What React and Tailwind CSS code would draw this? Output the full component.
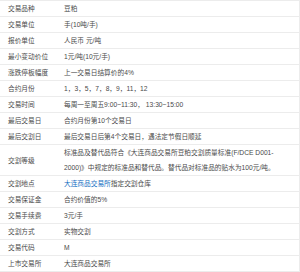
const rows = [
  ['交易品种', '豆粕'],
  ['交易单位', '手(10吨/手)'],
  ['报价单位', '人民币 元/吨'],
  ['最小变动价位', '1元/吨(10元/手)'],
  ['涨跌停板幅度', '上一交易日结算价的4%'],
  ['合约月份', '1，3，5，7，8，9，11，12'],
  ['交易时间', '每周一至周五9:00~11:30， 13:30~15:00'],
  ['最后交易日', '合约月份第10个交易日'],
  ['最后交割日', '最后交易日后第4个交易日，遇法定节假日顺延'],
  [
    '交割等级',
    '标准品及替代品符合《大连商品交易所豆粕交割质量标准(F/DCE D001-2000)》中规定的标准品和替代品。替代品对标准品的贴水为100元/吨。',
  ],
  [
    '交割地点',
    <>
      <span className="text-[#136ec2]">大连商品交易所</span>指定交割仓库
    </>,
  ],
  ['交易保证金', '合约价值的5%'],
  ['交易手续费', '3元/手'],
  ['交割方式', '实物交割'],
  ['交易代码', 'M'],
  ['上市交易所', '大连商品交易所'],
];

export default function App() {
  return (
    <div
      className="w-[300px] h-[272px] bg-white overflow-hidden text-[6.7px] leading-[15px] text-[#4a4a4a]"
      style={{ fontFamily: '"Liberation Sans", "Noto Sans CJK SC", sans-serif' }}
    >
      <div className="border-t border-r border-[#ececec]">
        {rows.map(([label, value], i) => (
          <div key={i} className="grid grid-cols-[56px_1fr] border-b border-[#ececec]">
            <div className="pl-[8px] flex items-center whitespace-nowrap">{label}</div>
            <div className="pl-[8px] pr-[9px]">{value}</div>
          </div>
        ))}
      </div>
    </div>
  );
}
